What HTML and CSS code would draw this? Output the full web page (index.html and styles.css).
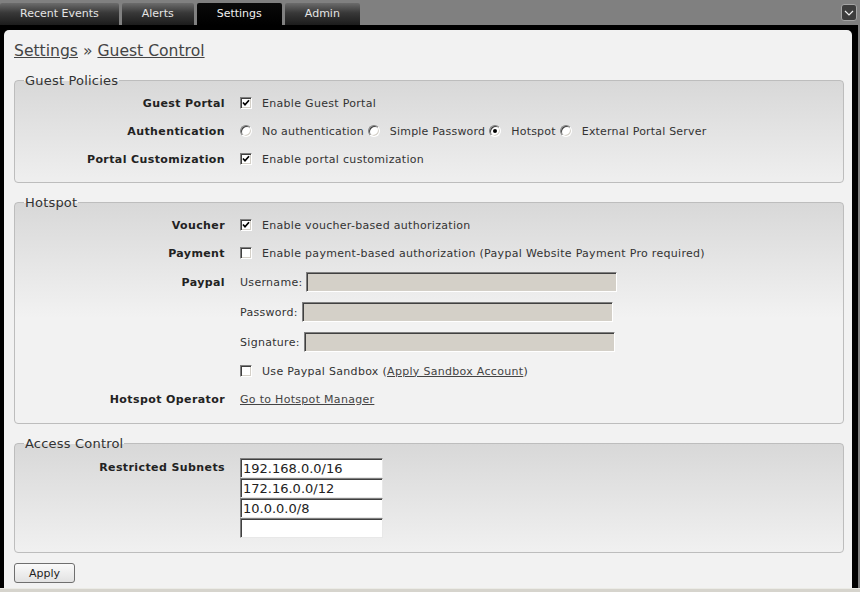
FILE: index.html
```html
<!DOCTYPE html>
<html lang="en">
<head>
  <meta charset="UTF-8">
  <title>Settings - Guest Control</title>
  <link rel="stylesheet" href="styles.css">
</head>
<body>

<!-- Top tabs -->
<div class="topbar">
  <ul class="tabs">
    <li class="tab">Recent Events</li>
    <li class="tab">Alerts</li>
    <li class="tab active">Settings</li>
    <li class="tab">Admin</li>
  </ul>
  <button class="menu-btn">
    <svg width="10" height="6" viewBox="0 0 10 6"><polyline points="1,1 5,5 9,1" fill="none" stroke="#eee" stroke-width="1.2"/></svg>
  </button>
</div>

<div class="frame">
  <div class="panel">
    <h1 class="crumbs"><a href="#">Settings</a> &raquo; <a href="#">Guest Control</a></h1>

    <!-- Guest Policies -->
    <fieldset>
      <legend>Guest Policies</legend>
      <div class="row">
        <span class="label">Guest Portal</span>
        <span class="opt"><span class="check on"><svg width="8" height="8" viewBox="0 0 8 8"><polyline points="1,3.5 3,5.8 7,1.2" fill="none" stroke="#000" stroke-width="1.7"/></svg></span>Enable Guest Portal</span>
      </div>
      <div class="row">
        <span class="label">Authentication</span>
        <span class="value radios">
          <span class="opt"><span class="radio"></span>No authentication</span>
          <span class="opt"><span class="radio"></span>Simple Password</span>
          <span class="opt"><span class="radio on"></span>Hotspot</span>
          <span class="opt"><span class="radio"></span>External Portal Server</span>
        </span>
      </div>
      <div class="row">
        <span class="label">Portal Customization</span>
        <span class="opt"><span class="check on"><svg width="8" height="8" viewBox="0 0 8 8"><polyline points="1,3.5 3,5.8 7,1.2" fill="none" stroke="#000" stroke-width="1.7"/></svg></span>Enable portal customization</span>
      </div>
    </fieldset>

    <!-- Hotspot -->
    <fieldset class="hotspot">
      <legend>Hotspot</legend>
      <div class="row">
        <span class="label">Voucher</span>
        <span class="opt"><span class="check on"><svg width="8" height="8" viewBox="0 0 8 8"><polyline points="1,3.5 3,5.8 7,1.2" fill="none" stroke="#000" stroke-width="1.7"/></svg></span>Enable voucher-based authorization</span>
      </div>
      <div class="row">
        <span class="label">Payment</span>
        <span class="opt"><span class="check"></span>Enable payment-based authorization (Paypal Website Payment Pro required)</span>
      </div>
      <div class="row tall">
        <span class="label">Paypal</span>
        <span class="opt">Username: <input class="field" type="text" disabled></span>
      </div>
      <div class="row tall">
        <span class="label"></span>
        <span class="opt">Password: <input class="field" type="password" disabled></span>
      </div>
      <div class="row tall">
        <span class="label"></span>
        <span class="opt">Signature: <input class="field" type="text" disabled></span>
      </div>
      <div class="row">
        <span class="label"></span>
        <span class="opt"><span class="check"></span>Use Paypal Sandbox (<a href="#">Apply Sandbox Account</a>)</span>
      </div>
      <div class="row">
        <span class="label">Hotspot Operator</span>
        <span class="opt"><a href="#">Go to Hotspot Manager</a></span>
      </div>
    </fieldset>

    <!-- Access Control -->
    <fieldset class="access">
      <legend>Access Control</legend>
      <div class="row subnets">
        <span class="label">Restricted Subnets</span>
        <span class="value">
          <input class="subnet" type="text" value="192.168.0.0/16">
          <input class="subnet" type="text" value="172.16.0.0/12">
          <input class="subnet" type="text" value="10.0.0.0/8">
          <input class="subnet" type="text" value="">
        </span>
      </div>
    </fieldset>

    <button class="btn">Apply</button>
  </div>
</div>

<div class="statusbar"></div>

</body>
</html>
```

FILE: styles.css
```css
body {
  margin: 0;
  height: 592px;
  display: flex;
  flex-direction: column;
  overflow: hidden;
  background-color: #808080;
  font-family: "DejaVu Sans", Verdana, sans-serif;
  font-size: 11px;
  color: #333;
}

a {
  color: #444;
}

/* top bar */
.topbar {
  flex: none;
  height: 25px;
  display: flex;
  justify-content: space-between;
  align-items: flex-end;
}

.tabs {
  list-style: none;
  margin: 0;
  padding: 0;
  display: flex;
}

.tab {
  height: 22px;
  line-height: 22px;
  padding: 0 20px;
  margin-right: 3px;
  color: #e4e4e4;
  background: linear-gradient(#6c6c6c, #383838 45%, #1c1c1c);
  border-radius: 2px 2px 0 0;
}

.tab.active {
  background: linear-gradient(#0a0a0a, #000);
  color: #f0f0f0;
}

.menu-btn {
  align-self: flex-start;
  margin: 4px 3px 0 0;
  width: 16px;
  height: 17px;
  padding: 0;
  display: flex;
  align-items: center;
  justify-content: center;
  background-color: #3c3c3c;
  border: 1px solid #a4a4a4;
  border-radius: 3px;
}

/* main frame */
.frame {
  flex: 1;
  display: flex;
  margin-right: 2px;
  padding: 5px 6px 0 4px;
  background-color: #000;
}

.panel {
  flex: 1;
  padding: 11px 8px 0 10px;
  background-color: #f2f2f2;
  border-radius: 5px 5px 0 0;
}

.crumbs {
  margin: 0 0 12px;
  font-size: 15.6px;
  font-weight: normal;
  line-height: 20px;
  color: #444;
}

fieldset {
  margin: 0 0 12px;
  padding: 1px 0 9px;
  min-width: 0;
  border: 1px solid #bdbdbd;
  border-radius: 4px;
  background: linear-gradient(#d8d8d8, #f2f2f2 115px);
  letter-spacing: 0.3px;
}

fieldset.hotspot {
  padding-bottom: 10px;
}

legend {
  margin-left: 9px;
  padding: 0 1px;
  font-size: 13px;
  line-height: 15px;
  letter-spacing: 0.2px;
  color: #333;
}

.row {
  display: grid;
  grid-template-columns: 210px 1fr;
  column-gap: 15px;
  align-items: center;
  height: 28px;
}

.row.tall {
  height: 30px;
}

.label {
  text-align: right;
  font-weight: bold;
  letter-spacing: 0.4px;
  color: #222;
}

.value {
  display: flex;
  align-items: center;
}

.radios {
  letter-spacing: 0.2px;
}

.opt {
  display: flex;
  align-items: center;
  white-space: nowrap;
}

.opt + .opt {
  margin-left: 4px;
}

.check,
.radio {
  flex: none;
  position: relative;
  box-sizing: border-box;
  width: 12px;
  height: 12px;
  margin-right: 10px;
  border: 1px solid;
  border-color: #808080 #fff #fff #808080;
  box-shadow: inset 1px 1px #404040, inset -1px -1px #d4d0c8;
  background-color: #fff;
}

.check svg {
  position: absolute;
  left: 1px;
  top: 1px;
}

.radio {
  border-radius: 50%;
}

.radio.on::after {
  content: "";
  position: absolute;
  left: 3px;
  top: 3px;
  width: 4px;
  height: 4px;
  border-radius: 50%;
  background-color: #000;
}

.field {
  box-sizing: border-box;
  width: 311px;
  height: 20px;
  margin: 0 0 0 4px;
  border: 1px solid;
  border-color: #808080 #fff #fff #808080;
  box-shadow: inset 1px 1px #404040;
  background-color: #d4d0c8;
}

.access {
  padding: 7px 0 14px;
}

.row.subnets {
  height: auto;
  align-items: start;
}

.row.subnets .label {
  line-height: 20px;
}

.row.subnets .value {
  flex-direction: column;
  align-items: flex-start;
}

.subnet {
  display: block;
  box-sizing: border-box;
  width: 143px;
  height: 20px;
  margin: 0;
  padding: 0 2px;
  border: 1px solid;
  border-color: #808080 #e8e8e8 #e8e8e8 #808080;
  box-shadow: inset 1px 1px #404040;
  background-color: #fff;
  font-family: "DejaVu Sans", Verdana, sans-serif;
  font-size: 13px;
  letter-spacing: 0;
  color: #222;
}

.btn {
  display: block;
  width: 61px;
  height: 20px;
  margin-top: -2px;
  padding: 0;
  border: 1px solid #6f6f6f;
  border-radius: 3px;
  background: linear-gradient(#fafafa, #e2e2e2);
  font-family: "DejaVu Sans", Verdana, sans-serif;
  font-size: 11px;
  color: #222;
}

.statusbar {
  flex: none;
  height: 4px;
  border-top: 1px solid #ebebe6;
  background-color: #d6d4cd;
  box-sizing: border-box;
}
```
